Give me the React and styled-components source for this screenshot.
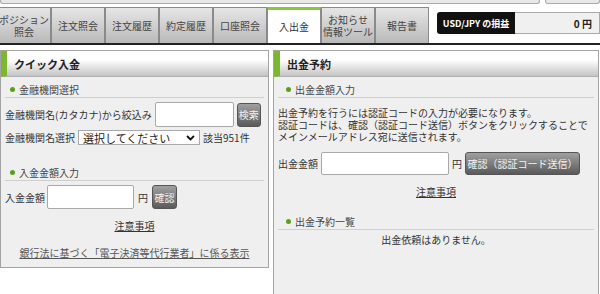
import React from 'react';
import styled, { createGlobalStyle } from 'styled-components';

const GlobalStyle = createGlobalStyle`
  *, *::before, *::after { box-sizing: border-box; }
  html, body { margin: 0; padding: 0; background: #fff; }
  body {
    font-family: "Noto Sans CJK JP", "Noto Sans", sans-serif;
    font-size: 10px;
    color: #333;
    overflow: hidden;
  }
`;

const Page = styled.div`
  width: 600px;
  height: 294px;
  overflow: hidden;
`;

const TopStrip = styled.div`
  display: flex;
  gap: 5px;
  height: 4px;
`;

const TopBox = styled.div`
  flex: ${(p) => (p.$grow ? '1' : '0 0 540px')};
  background: #e8e8e8;
  border: 1px solid #aaa;
  border-top: none;
  border-radius: 0 0 3px 3px;
`;

const TabBar = styled.div`
  display: flex;
  margin-top: 3px;
  height: 38px;
  border-bottom: 2px solid #222;
`;

const Tab = styled.div`
  flex: 0 0 54px;
  height: 36px;
  margin-left: ${(p) => (p.$first ? '-3px' : '0')};
  display: flex;
  align-items: center;
  justify-content: center;
  text-align: center;
  line-height: 12px;
  font-size: 10px;
  color: ${(p) => (p.$active ? '#333' : '#444')};
  border: 1px solid #8a8a8a;
  border-bottom: none;
  border-top: ${(p) => (p.$active ? '3px solid #8cc63f' : '1px solid #8a8a8a')};
  background: ${(p) => (p.$active ? '#fff' : 'linear-gradient(#e6e6e6, #b9b9b9)')};
`;

const PnL = styled.div`
  margin-left: auto;
  margin-top: 5px;
  display: flex;
  width: 163px;
  height: 22px;
`;

const PnLLabel = styled.div`
  flex: 0 0 78px;
  background: #111;
  color: #fff;
  font-weight: bold;
  font-size: 9px;
  display: flex;
  align-items: center;
  justify-content: center;
  border-radius: 3px 0 0 3px;
`;

const PnLValue = styled.div`
  flex: 1;
  background: #f0f0f0;
  border: 1px solid #aaa;
  border-left: none;
  display: flex;
  align-items: center;
  justify-content: flex-end;
  padding-right: 7px;
  font-weight: bold;
  font-size: 10px;
  color: #222;
`;

const Content = styled.div`
  display: flex;
  align-items: flex-start;
  gap: 4px;
  padding-top: 5px;
`;

const Panel = styled.div`
  flex: 0 0 ${(p) => p.$w}px;
  height: ${(p) => p.$h}px;
  border: 1px solid #a3a3a3;
  background: #efefef;
`;

const PanelHeader = styled.div`
  height: 26px;
  border-left: 6px solid #7cb82f;
  border-bottom: 1px solid #b0b0b0;
  padding-left: 7px;
  display: flex;
  align-items: center;
  font-size: 11px;
  font-weight: bold;
  color: #222;
  background: linear-gradient(#fff 0%, #fff 35%, #c4c4c4 100%);
`;

const Body = styled.div`
  padding: 0 4px;
`;

const Heading = styled.div`
  margin-top: ${(p) => p.$mt}px;
  height: 17px;
  padding-left: ${(p) => p.$pl || 5}px;
  border-bottom: 1px solid #cfcfcf;
  display: flex;
  align-items: center;
  color: #444;
  font-size: 10px;
`;

const Dot = styled.span`
  width: 5px;
  height: 5px;
  border-radius: 50%;
  background: #5c9e1c;
  margin-right: 4px;
`;

const Row = styled.div`
  margin-top: ${(p) => p.$mt}px;
  height: ${(p) => p.$h}px;
  display: flex;
  align-items: center;
  gap: ${(p) => p.$gap || 3}px;
  white-space: nowrap;
`;

const Label = styled.span`
  color: #333;
`;

const TextInput = styled.div`
  width: ${(p) => p.$w}px;
  height: ${(p) => p.$h}px;
  background: #fff;
  border: 1px solid #a9a9a9;
  border-radius: 2px;
`;

const Button = styled.div`
  width: ${(p) => p.$w}px;
  height: ${(p) => p.$h}px;
  display: flex;
  align-items: center;
  justify-content: center;
  color: #f2f2f2;
  font-size: 10px;
  border: 1px solid #555;
  border-radius: 3px;
  background: linear-gradient(#a0a0a0, #5a5a5a);
`;

const Select = styled.div`
  width: 122px;
  height: 15px;
  background: #fff;
  border: 1px solid #a9a9a9;
  display: flex;
  align-items: center;
  padding: 0 4px;
  font-size: 11px;
  color: #222;
  justify-content: space-between;
`;

const LinkLine = styled.div`
  margin-top: ${(p) => p.$mt}px;
  height: 14px;
  line-height: 14px;
  text-align: center;
  ${(p) => (p.$offset ? `padding-left: ${p.$offset}px;` : '')}
  a {
    color: ${(p) => p.$color || '#333'};
    text-decoration: underline;
  }
`;

const Paragraph = styled.p`
  margin: 9px 0 0;
  line-height: 12px;
  color: #333;
  white-space: nowrap;
`;

const CenterText = styled.div`
  margin-top: 3px;
  height: 14px;
  line-height: 14px;
  text-align: center;
`;

const Chevron = () => (
  <svg width="9" height="6" viewBox="0 0 9 6">
    <path d="M1 1 L4.5 4.5 L8 1" fill="none" stroke="#111" strokeWidth="1.8" />
  </svg>
);

const tabs = [
  ['ポジション', '照会'],
  ['注文照会'],
  ['注文履歴'],
  ['約定履歴'],
  ['口座照会'],
  ['入出金'],
  ['お知らせ', '情報ツール'],
  ['報告書'],
];

export default function App() {
  return (
    <Page>
      <GlobalStyle />
      <TopStrip>
        <TopBox />
        <TopBox $grow />
      </TopStrip>
      <TabBar>
        {tabs.map((t, i) => (
          <Tab key={i} $first={i === 0} $active={t[0] === '入出金'}>
            <div>
              {t.map((line) => (
                <div key={line}>{line}</div>
              ))}
            </div>
          </Tab>
        ))}
        <PnL>
          <PnLLabel>USD/JPY の損益</PnLLabel>
          <PnLValue>0 円</PnLValue>
        </PnL>
      </TabBar>
      <Content>
        <Panel $w={269} $h={218}>
          <PanelHeader>クイック入金</PanelHeader>
          <Body>
            <Heading $mt={4}>
              <Dot />
              金融機関選択
            </Heading>
            <Row $mt={4} $h={25}>
              <Label>金融機関名(カタカナ)から絞込み</Label>
              <TextInput $w={79} $h={25} />
              <Button $w={24} $h={24}>検索</Button>
            </Row>
            <Row $mt={3} $h={15}>
              <Label>金融機関名選択</Label>
              <Select>
                <span>選択してください</span>
                <Chevron />
              </Select>
              <Label>該当951件</Label>
            </Row>
            <Heading $mt={19}>
              <Dot />
              入金金額入力
            </Heading>
            <Row $mt={4} $h={24} $gap={2}>
              <Label>入金金額</Label>
              <TextInput $w={87} $h={24} />
              <Label style={{ margin: '0 2px' }}>円</Label>
              <Button $w={25} $h={24}>確認</Button>
            </Row>
            <LinkLine $mt={10}>
              <a>注意事項</a>
            </LinkLine>
            <LinkLine $mt={13} $color="#555">
              <a>銀行法に基づく「電子決済等代行業者」に係る表示</a>
            </LinkLine>
          </Body>
        </Panel>
        <Panel $w={326} $h={260}>
          <PanelHeader>出金予約</PanelHeader>
          <Body>
            <Heading $mt={4} $pl={8}>
              <Dot />
              出金金額入力
            </Heading>
            <Paragraph>
              出金予約を行うには認証コードの入力が必要になります。
              <br />
              認証コードは、確認（認証コード送信）ボタンをクリックすることで
              <br />
              メインメールアドレス宛に送信されます。
            </Paragraph>
            <Row $mt={9} $h={23}>
              <Label>出金金額</Label>
              <TextInput $w={128} $h={23} />
              <Label>円</Label>
              <Button $w={115} $h={23}>確認（認証コード送信）</Button>
            </Row>
            <LinkLine $mt={10}>
              <a>注意事項</a>
            </LinkLine>
            <Heading $mt={14} $pl={8}>
              <Dot />
              出金予約一覧
            </Heading>
            <CenterText>出金依頼はありません。</CenterText>
          </Body>
        </Panel>
      </Content>
    </Page>
  );
}
